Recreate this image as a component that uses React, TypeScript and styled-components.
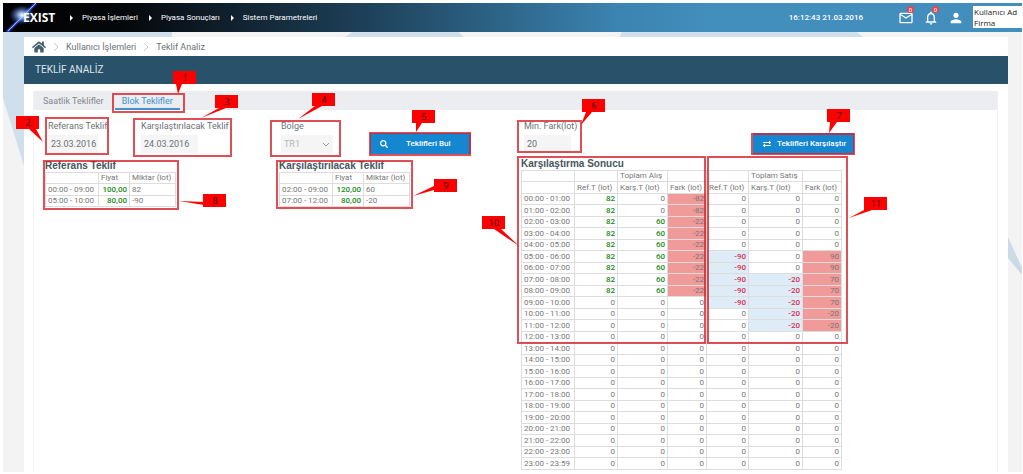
import React from 'react';
import styled, { createGlobalStyle, css } from 'styled-components';
import { FaHome, FaSearch, FaExchangeAlt } from 'react-icons/fa';
import { MdMailOutline, MdNotificationsNone, MdPerson } from 'react-icons/md';

const GlobalStyle = createGlobalStyle`
  * { box-sizing: border-box; }
  body { margin: 0; background: #fff; color: #6c7276; font: 9px/12px Roboto, "Open Sans", sans-serif; }
  button, input, select { font: inherit; color: inherit; margin: 0; }
  a { color: inherit; text-decoration: none; }
`;

const Page = styled.div`
  position: relative;
  padding: 3px 1px 3px 3px;
`;

const Header = styled.header`
  position: relative;
  display: flex;
  align-items: center;
  height: 29px;
  color: #fff;
  background: linear-gradient(90deg, #000 0%, #05080b 12%, #1d3f57 35%, #3b83b0 60%, #428ebd 70%, #428ebd 100%);
`;

const Logo = styled.svg`
  width: 60px;
  height: 29px;
  flex: none;
`;

const Menu = styled.nav`
  display: flex;
  flex: 1;
  gap: 11px;
  padding-left: 7px;
  font-size: 8px;
`;

const MenuLink = styled.a`
  display: flex;
  align-items: center;
  gap: 9px;
  &::before {
    content: "";
    border: 3px solid transparent;
    border-left: 3px solid #fff;
    border-right: 0;
  }
`;

const Clock = styled.time`
  font-size: 8px;
  font-weight: 500;
  margin-right: 35px;
`;

const IconButton = styled.button`
  position: relative;
  display: flex;
  width: 25px;
  padding: 0;
  border: 0;
  background: none;
  color: #fff;
  font-size: 16px;
`;

const Count = styled.span`
  position: absolute;
  top: -4px;
  left: 9px;
  width: 7px;
  height: 7px;
  border-radius: 4px;
  background: #e8454c;
  font-size: 6px;
  line-height: 7px;
  text-align: center;
`;

const User = styled.div`
  flex: none;
  width: 49px;
  height: 22px;
  margin-bottom: 2px;
  padding-left: 1px;
  background: #fff;
  color: #222;
  font: 8px/11px "Open Sans", sans-serif;
  white-space: nowrap;
`;

const Backdrop = styled.div`
  position: relative;
  padding: 5px 14px 0 21px;
  background: #f3f3f3;
`;

const Shapes = styled.svg`
  position: absolute;
  top: 0;
  left: 0;
  width: 100%;
  height: 100%;
`;

const Card = styled.main`
  position: relative;
  background: #fff;
`;

const Crumbs = styled.nav`
  display: flex;
  align-items: center;
  height: 19px;
  padding-left: 8px;
  gap: 7px;
  font-size: 9px;
`;

const HomeLink = styled.a`
  display: flex;
  font-size: 14px;
  color: #44606f;
`;

const Divider = styled.svg`
  width: 6px;
  height: 10px;
  fill: none;
  stroke: #c8cdd0;
`;

const Title = styled.h1`
  height: 28px;
  margin: 0 0 7px;
  padding-left: 11px;
  background: #29516a;
  color: #dbe5ea;
  font-size: 10px;
  font-weight: 400;
  line-height: 28px;
`;

const Panel = styled.section`
  margin: 0 10px 0 9px;
  padding-bottom: 2px;
  border: 1px solid #f1f1f1;
  border-width: 0 1px;
`;

const Tabs = styled.div`
  display: flex;
  align-items: flex-end;
  gap: 4px;
  height: 19px;
  padding-left: 2px;
  background: #ebedf0;
`;

const Tab = styled.button<{ $active?: boolean }>`
  height: 18px;
  padding: 1px 7px 0;
  border: 0;
  border-bottom: 2px solid ${p => (p.$active ? '#3f93cf' : 'transparent')};
  background: none;
  color: ${p => (p.$active ? '#3f93cf' : '#83888c')};
  font-size: 9px;
`;

const Columns = styled.div`
  display: grid;
  grid-template-columns: 476px 1fr;
  padding: 10px 0 0 11px;
`;

const Filters = styled.form<{ $height: number }>`
  display: flex;
  height: ${p => p.$height}px;
`;

const Field = styled.div<{ $width: number }>`
  display: flex;
  flex-direction: column;
  gap: 3px;
  width: ${p => p.$width}px;
  padding-left: 3px;
  white-space: nowrap;
`;

const fieldBox = css`
  height: 18px;
  padding: 0 0 0 3px;
  border: 0;
  border-radius: 0;
  background: #f5f5f5;
`;

const Input = styled.input<{ $width: number }>`
  ${fieldBox}
  width: ${p => p.$width}px;
`;

const SelectWrap = styled.span`
  position: relative;
  width: 52px;
  svg {
    position: absolute;
    right: 3px;
    top: 7px;
    width: 8px;
    height: 5px;
    fill: none;
    stroke: #999;
  }
`;

const Select = styled.select`
  ${fieldBox}
  width: 100%;
  appearance: none;
  color: #b5b5b5;
`;

const Action = styled.button<{ $gap: number }>`
  display: flex;
  align-items: center;
  gap: ${p => p.$gap}px;
  width: 101px;
  height: 21px;
  margin-top: 13px;
  padding: 0 0 0 10px;
  border: 0;
  background: #1586d0;
  color: #fff;
  font-size: 8px;
  font-weight: 500;
  white-space: nowrap;
`;

const Results = styled.div`
  display: flex;
  gap: 103px;
`;

const Heading = styled.h2`
  width: 130px;
  margin: 0;
  color: #47565f;
  font: bold 10px/12px "Liberation Sans", sans-serif;
  white-space: nowrap;
`;

const Table = styled.table`
  border-collapse: collapse;
  table-layout: fixed;
  color: #777;
  font-size: 8px;
  line-height: 10px;
  white-space: nowrap;
  th, td { height: 11px; padding: 0 2px; border: 1px solid #ddd; font-weight: 400; text-align: left; }
  tr:nth-child(even) > * { height: 12px; }
`;

type Tone = 'buy' | 'sell' | 'diff' | 'plain';

const Num = styled.td<{ $tone: Tone }>`
  && {
    text-align: right;
    ${p => p.$tone === 'buy' && 'color: #218a21; font-weight: 500;'}
    ${p => p.$tone === 'sell' && 'color: #d9304f; font-weight: 500; background: #deecf8;'}
    ${p => p.$tone === 'diff' && 'background: #f09a9a;'}
  }
`;

const Notes = styled.svg`
  position: absolute;
  top: 0;
  left: 0;
  width: 100%;
  height: 100%;
  pointer-events: none;
  rect.outline { fill: none; stroke: #d8222c; stroke-width: 2px; opacity: 0.8; }
  .flag { fill: #fe0000; }
  text { fill: #400000; font: 9px "Open Sans", sans-serif; text-anchor: middle; }
`;

type Note = { box: [number, number, number, number]; flag: [number, number]; tail: string };

const notes: Note[] = [
  { box: [113, 94, 71, 18], flag: [173, 71], tail: '176,84 182,84 178,94' },
  { box: [46, 118, 62, 36], flag: [16, 116], tail: '29,129 36,129 43,142' },
  { box: [134, 119, 97, 37], flag: [215, 95], tail: '219,108 226,108 201,118' },
  { box: [271, 121, 69, 35], flag: [312, 93], tail: '315,106 322,106 298,119' },
  { box: [370, 133, 100, 22], flag: [412, 110], tail: '416,123 422,123 416,132' },
  { box: [518, 121, 63, 31], flag: [582, 99], tail: '586,112 592,112 581,125' },
  { box: [752, 134, 102, 20], flag: [827, 109], tail: '830,122 837,122 829,133' },
  { box: [44, 161, 134, 48], flag: [203, 194], tail: '204,202 204,205 179,201' },
  { box: [277, 161, 135, 47], flag: [434, 179], tail: '434,186 434,190 413,196' },
  { box: [518, 157, 187, 186], flag: [482, 216], tail: '494,229 501,229 519,246' },
  { box: [708, 157, 139, 186], flag: [864, 197], tail: '866,209 875,209 849,218' },
];

const hours = Array.from({ length: 24 }, (_, h) => {
  const two = (n: number) => String(n).padStart(2, '0');
  return `${two(h)}:00 - ${h === 23 ? '23:59' : `${two(h + 1)}:00`}`;
});

const comparison = hours.map((hour, h) => {
  const buyRef = h < 9 ? 82 : 0;
  const buyCmp = h >= 2 && h < 9 ? 60 : 0;
  const sellRef = h >= 5 && h < 10 ? -90 : 0;
  const sellCmp = h >= 7 && h < 12 ? -20 : 0;
  const sellDiff = sellRef ? sellCmp - sellRef : sellCmp;
  return { hour, values: [buyRef, buyCmp, buyCmp - buyRef, sellRef, sellCmp, sellDiff] };
});

const toneOf = (value: number, column: number): Tone =>
  value === 0 ? 'plain' : column % 3 === 2 ? 'diff' : column < 3 ? 'buy' : 'sell';

const Cols = ({ widths }: { widths: number[] }) => (
  <colgroup>{widths.map((w, i) => <col key={i} style={{ width: w }} />)}</colgroup>
);

const sum = (widths: number[]) => widths.reduce((a, b) => a + b, 0);

const OfferTable = ({ title, widths, rows }: { title: string; widths: number[]; rows: string[][] }) => (
  <div>
    <Heading>{title}</Heading>
    <Table style={{ width: sum(widths) }}>
      <Cols widths={widths} />
      <tbody>
        <tr><th /><th scope="col">Fiyat</th><th scope="col">Miktar (lot)</th></tr>
        {rows.map(([hour, price, lots]) => (
          <tr key={hour}><td>{hour}</td><Num $tone="buy">{price}</Num><td>{lots}</td></tr>
        ))}
      </tbody>
    </Table>
  </div>
);

const offerWidths = [53, 31, 46];
const comparisonWidths = [53, 43, 50, 39, 42, 54, 39];

const Chevron = () => (
  <Divider viewBox="0 0 6 10" aria-hidden="true"><path d="M1 1l4 4-4 4" /></Divider>
);

export default function App() {
  return (
    <Page>
      <GlobalStyle />
      <Header>
        <Logo viewBox="0 0 60 29" role="img" aria-label="EXIST">
          <defs>
            <radialGradient id="glow">
              <stop offset="0" stopColor="#fff" />
              <stop offset="0.3" stopColor="#a9cfff" stopOpacity="0.8" />
              <stop offset="1" stopColor="#2a55d8" stopOpacity="0" />
            </radialGradient>
          </defs>
          <path d="M4 29L33 0" stroke="#2440c8" strokeWidth="3" />
          <path d="M5 28L33 0" stroke="#9db8ff" strokeWidth="1" />
          <ellipse cx="19" cy="12" rx="13" ry="10" fill="url(#glow)" />
          <text x="20" y="19" fill="#fff" fontFamily="Open Sans, sans-serif" fontWeight="700" fontSize="12">EXIST</text>
        </Logo>
        <Menu>
          <MenuLink href="#islemler">Piyasa İşlemleri</MenuLink>
          <MenuLink href="#sonuclar">Piyasa Sonuçları</MenuLink>
          <MenuLink href="#parametreler">Sistem Parametreleri</MenuLink>
        </Menu>
        <Clock>16:12:43 21.03.2016</Clock>
        <IconButton aria-label="Mesajlar"><MdMailOutline /><Count>0</Count></IconButton>
        <IconButton aria-label="Bildirimler"><MdNotificationsNone /><Count>0</Count></IconButton>
        <IconButton aria-label="Profil"><MdPerson /></IconButton>
        <User>Kullanıcı Ad<br />Firma</User>
      </Header>
      <Backdrop>
        <Shapes aria-hidden="true">
          <path d="M0 0H169V6H21V134L0 66Z" fill="#cfe0ec" />
          <path d="M349 0H456L461 6H341Z" fill="#cfe0ec" />
          <path d="M619 0H854L861 6H616Z" fill="#cfe0ec" />
          <svg x="100%" overflow="visible">
            <path d="M-14 205L0 236V243L-14 226Z" fill="#cbdbe6" />
          </svg>
        </Shapes>
        <Card>
          <Crumbs>
            <HomeLink href="#home" aria-label="Ana sayfa"><FaHome /></HomeLink>
            <Chevron />
            <a href="#kullanici">Kullanıcı İşlemleri</a>
            <Chevron />
            <a href="#teklif">Teklif Analiz</a>
          </Crumbs>
          <Title>TEKLİF ANALİZ</Title>
          <Panel>
            <Tabs role="tablist">
              <Tab role="tab">Saatlik Teklifler</Tab>
              <Tab role="tab" aria-selected="true" $active>Blok Teklifler</Tab>
            </Tabs>
            <Columns>
              <div>
                <Filters $height={40}>
                  <Field $width={93}>
                    <label htmlFor="ref">Referans Teklif</label>
                    <Input id="ref" $width={50} defaultValue="23.03.2016" />
                  </Field>
                  <Field $width={140}>
                    <label htmlFor="cmp">Karşılaştırılacak Teklif</label>
                    <Input id="cmp" $width={57} defaultValue="24.03.2016" />
                  </Field>
                  <Field $width={92}>
                    <label htmlFor="region">Bölge</label>
                    <SelectWrap>
                      <Select id="region"><option>TR1</option></Select>
                      <svg viewBox="0 0 8 5"><path d="M1 1l3 3 3-3" /></svg>
                    </SelectWrap>
                  </Field>
                  <Action type="button" $gap={18}><FaSearch />Teklifleri Bul</Action>
                </Filters>
                <Results>
                  <OfferTable title="Referans Teklif" widths={offerWidths} rows={[['00:00 - 09:00', '100,00', '82'], ['05:00 - 10:00', '80,00', '-90']]} />
                  <OfferTable title="Karşılaştırılacak Teklif" widths={offerWidths} rows={[['02:00 - 09:00', '120,00', '60'], ['07:00 - 12:00', '80,00', '-20']]} />
                </Results>
              </div>
              <div>
                <Filters $height={38}>
                  <Field $width={232}>
                    <label htmlFor="min">Min. Fark(lot)</label>
                    <Input id="min" $width={47} defaultValue="20" />
                  </Field>
                  <Action type="button" $gap={6}><FaExchangeAlt />Teklifleri Karşılaştır</Action>
                </Filters>
                <Heading>Karşılaştırma Sonucu</Heading>
                <Table style={{ width: sum(comparisonWidths) }}>
                  <Cols widths={comparisonWidths} />
                  <tbody>
                    <tr><th /><th /><th>Toplam Alış</th><th /><th /><th>Toplam Satış</th><th /></tr>
                    <tr>
                      <th /><th>Ref.T (lot)</th><th>Karş.T (lot)</th><th>Fark (lot)</th>
                      <th>Ref.T (lot)</th><th>Karş.T (lot)</th><th>Fark (lot)</th>
                    </tr>
                    {comparison.map(({ hour, values }) => (
                      <tr key={hour}>
                        <td>{hour}</td>
                        {values.map((v, i) => <Num key={i} $tone={toneOf(v, i)}>{v}</Num>)}
                      </tr>
                    ))}
                  </tbody>
                </Table>
              </div>
            </Columns>
          </Panel>
        </Card>
      </Backdrop>
      <Notes>
        {notes.map(({ box: [x, y, w, h], flag: [fx, fy], tail }, i) => (
          <g key={i}>
            <rect className="outline" x={x} y={y} width={w} height={h} />
            <polygon className="flag" points={tail} />
            <rect className="flag" x={fx} y={fy} width="23" height="13" />
            <text x={fx + 12} y={fy + 10}>{i + 1}</text>
          </g>
        ))}
      </Notes>
    </Page>
  );
}
